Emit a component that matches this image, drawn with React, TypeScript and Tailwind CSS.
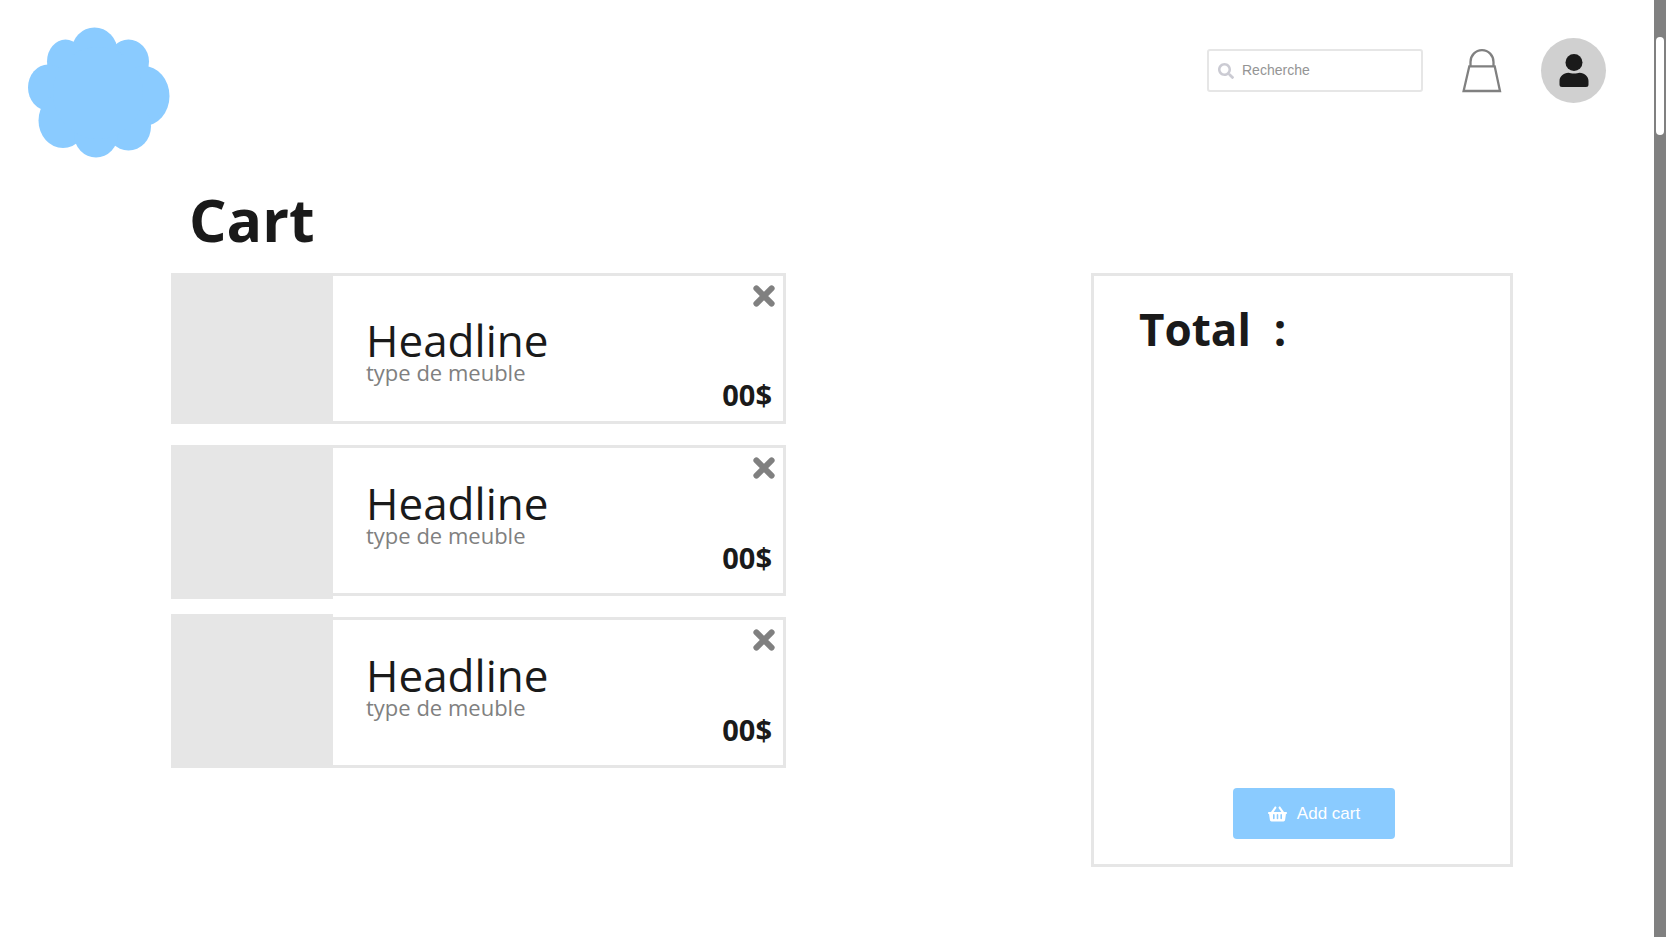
import React from "react";
import { FaSearch, FaShoppingBasket } from "react-icons/fa";

type CartItem = {
  id: number;
  name: string;
  kind: string;
  price: string;
  imageClass: string;
  bodyClass: string;
};

const items: CartItem[] = [
  { id: 1, name: "Headline", kind: "type de meuble", price: "00$", imageClass: "self-stretch", bodyClass: "pt-[45px]" },
  { id: 2, name: "Headline", kind: "type de meuble", price: "00$", imageClass: "h-[154px] self-start", bodyClass: "pt-[36px]" },
  { id: 3, name: "Headline", kind: "type de meuble", price: "00$", imageClass: "h-[154px] self-end", bodyClass: "pt-[36px]" },
];

function Logo() {
  return (
    <svg viewBox="0 0 142 132" className="h-[132px] w-[142px]" fill="#8acbff" role="img" aria-label="Logo">
      <ellipse cx="66.500" cy="24.500" rx="23" ry="24" />
      <ellipse cx="37.500" cy="34.500" rx="18.500" ry="22" />
      <ellipse cx="100.500" cy="34.500" rx="20.500" ry="22" />
      <ellipse cx="20" cy="60.500" rx="20" ry="23" />
      <ellipse cx="115.500" cy="69" rx="26" ry="30" />
      <ellipse cx="35" cy="93.500" rx="24.500" ry="27.500" />
      <ellipse cx="100.500" cy="99.500" rx="22.500" ry="24" />
      <ellipse cx="68" cy="107.500" rx="22" ry="23" />
      <ellipse cx="70" cy="66" rx="45" ry="46" />
    </svg>
  );
}

function BagIcon() {
  return (
    <svg viewBox="0 0 40 44" className="h-[44px] w-[40px]" fill="none" stroke="#808080" strokeWidth="2.300">
      <path d="M8.500 17V13C8.500 6.500 13.500 1.200 20 1.200S31.500 6.500 31.500 13V17" />
      <path d="M7.300 17.300H32.700L38 42H1.600Z" />
    </svg>
  );
}

function UserIcon() {
  return (
    <svg viewBox="0 0 30 34" className="h-[34px] w-[30px]" fill="#1a1a1a">
      <circle cx="15" cy="8.500" r="8.500" />
      <path d="M0.500 30.500V27C0.500 22.500 4.500 18.800 9.500 18.800C11 18.800 12.500 19.600 15 19.600S19 18.800 20.500 18.800C25.500 18.800 29.500 22.500 29.500 27V30.500Q29.500 33 27 33H3Q0.500 33 0.500 30.500Z" />
    </svg>
  );
}

function CrossIcon() {
  return (
    <svg viewBox="0 0 22 22" className="h-[22px] w-[22px]" stroke="#808080" strokeWidth="6" strokeLinecap="round">
      <path d="M3.400 3.400L18.600 18.600M18.600 3.400L3.400 18.600" />
    </svg>
  );
}

function CartRow({ item }: { item: CartItem }) {
  return (
    <li className="flex h-[151px] outline-3 -outline-offset-3 outline-[#e6e6e6]">
      <div className={`w-[162px] shrink-0 bg-[#e6e6e6] ${item.imageClass}`} />
      <div className={`min-w-0 flex-1 pl-[33px] ${item.bodyClass}`}>
        <h2 className="text-[44px] leading-[44px] text-[#1a1a1a]">{item.name}</h2>
        <p className="text-[22px] leading-[20px] text-[#808080]">{item.kind}</p>
        <p className="pr-[14px] text-right text-[29px] leading-[26px] font-bold text-[#1a1a1a]">{item.price}</p>
      </div>
      <div className="relative w-0">
        <button type="button" aria-label="Remove item" className="absolute top-[12px] right-[11px] cursor-pointer">
          <CrossIcon />
        </button>
      </div>
    </li>
  );
}

export default function App() {
  return (
    <div className="flex min-h-screen bg-white font-['Open_Sans',sans-serif]">
      <div className="min-w-0 flex-1">
        <header className="flex items-start justify-between pt-[27px] pr-[48px] pl-[28px]">
          <a href="#home" aria-label="Home">
            <Logo />
          </a>
          <div className="flex items-center gap-[39px] pt-[11px]">
            <label className="flex h-[43px] w-[216px] items-center gap-[8px] rounded-[3px] border-2 border-[#e6e6e6] px-[9px]">
              <FaSearch className="h-[16px] w-[16px] shrink-0 text-[#cbcbd3]" />
              <input
                type="search"
                aria-label="Recherche"
                placeholder="Recherche"
                className="w-full min-w-0 bg-transparent font-['Liberation_Sans',sans-serif] text-[14px] text-[#1a1a1a] outline-none placeholder:text-[#949494]"
              />
            </label>
            <button type="button" aria-label="Bag" className="cursor-pointer">
              <BagIcon />
            </button>
            <button
              type="button"
              aria-label="Account"
              className="flex h-[65px] w-[65px] cursor-pointer items-center justify-center rounded-full bg-[#d0d0d0]"
            >
              <UserIcon />
            </button>
          </div>
        </header>

        <main className="pr-[141px] pl-[171px]">
          <h1 className="pt-[20px] pl-[18px] text-[59px] leading-[80px] font-bold text-[#1a1a1a]">Cart</h1>
          <div className="flex items-start justify-between gap-8 pt-[14px]">
            <ul className="flex w-[615px] flex-col gap-[21px]">
              {items.map((item) => (
                <CartRow key={item.id} item={item} />
              ))}
            </ul>
            <section className="flex min-h-[594px] w-[422px] flex-col justify-between border-3 border-[#e6e6e6] pt-[23px] pr-[15px] pb-[25px] pl-[45px]">
              <h2 className="text-[44px] leading-[60px] font-bold whitespace-pre text-[#1a1a1a]">{"Total  :"}</h2>
              <button
                type="button"
                className="ml-[94px] flex h-[51px] w-[162px] cursor-pointer items-center justify-center gap-[10px] rounded-[4px] bg-[#8acbff] font-['Liberation_Sans',sans-serif] text-[17px] text-white"
              >
                <FaShoppingBasket className="h-[18px] w-[19px]" />
                Add cart
              </button>
            </section>
          </div>
        </main>
      </div>
      <div className="mr-px w-[12px] shrink-0 bg-[#808080] pt-[37px]">
        <div className="mx-auto h-[98px] w-[8px] rounded-full bg-white" />
      </div>
    </div>
  );
}
